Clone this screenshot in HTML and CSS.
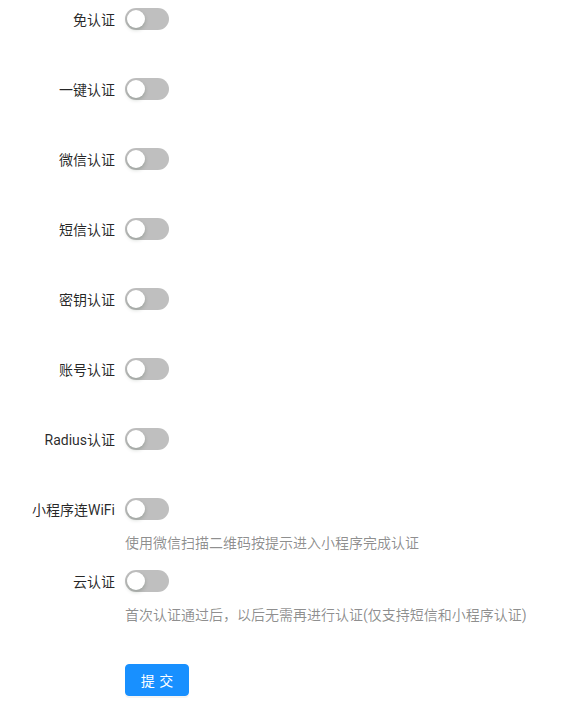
FILE: index.html
```html
<!DOCTYPE html>
<html lang="zh-CN">
<head>
    <meta charset="UTF-8">
    <meta name="viewport" content="width=device-width, initial-scale=1.0">
    <title>认证设置</title>
    <link rel="stylesheet" href="styles.css">
</head>
<body>
    <form class="auth-form">
        <div class="item">
            <label class="item-label">免认证</label>
            <div class="item-control"><button type="button" class="switch"></button></div>
        </div>
        <div class="item">
            <label class="item-label">一键认证</label>
            <div class="item-control"><button type="button" class="switch"></button></div>
        </div>
        <div class="item">
            <label class="item-label">微信认证</label>
            <div class="item-control"><button type="button" class="switch"></button></div>
        </div>
        <div class="item">
            <label class="item-label">短信认证</label>
            <div class="item-control"><button type="button" class="switch"></button></div>
        </div>
        <div class="item">
            <label class="item-label">密钥认证</label>
            <div class="item-control"><button type="button" class="switch"></button></div>
        </div>
        <div class="item">
            <label class="item-label">账号认证</label>
            <div class="item-control"><button type="button" class="switch"></button></div>
        </div>
        <div class="item">
            <label class="item-label">Radius认证</label>
            <div class="item-control"><button type="button" class="switch"></button></div>
        </div>
        <div class="item with-extra">
            <label class="item-label">小程序连WiFi</label>
            <div class="item-control">
                <button type="button" class="switch"></button>
                <div class="extra">使用微信扫描二维码按提示进入小程序完成认证</div>
            </div>
        </div>
        <div class="item with-extra">
            <label class="item-label">云认证</label>
            <div class="item-control">
                <button type="button" class="switch"></button>
                <div class="extra">首次认证通过后，以后无需再进行认证(仅支持短信和小程序认证)</div>
            </div>
        </div>
        <div class="item submit-row">
            <div class="item-label"></div>
            <div class="item-control"><button type="submit" class="btn-primary">提 交</button></div>
        </div>
    </form>
</body>
</html>
```

FILE: styles.css
```css
*{
    padding:0px;
    margin:0px;
    box-sizing: border-box;
}
body{
    background:#fff;
    font-family: Roboto, "Noto Sans CJK SC", sans-serif;
    font-size:14px;
    color:rgba(0,0,0,.85);
}
.item{
    display:flex;
    align-items:flex-start;
    margin-bottom:32px;
}
.item.with-extra{
    margin-bottom:8px;
}
.item-label{
    width:115px;
    flex-shrink:0;
    margin-right:10px;
    padding-top:2px;
    text-align:right;
    line-height:36px;
    white-space:nowrap;
}
.item-control{
    flex:1;
    min-height:38px;
    display:flex;
    flex-direction:column;
    align-items:flex-start;
}
.switch{
    position:relative;
    margin-top:8px;
    width:44px;
    height:22px;
    border:none;
    border-radius:100px;
    background-color:rgba(0,0,0,.25);
    cursor:pointer;
    flex-shrink:0;
}
.switch::after{
    content:'';
    position:absolute;
    top:2px;
    left:2px;
    width:18px;
    height:18px;
    border-radius:50%;
    background:#fff;
    box-shadow:0 2px 4px 0 rgba(0,35,11,.2);
}
.extra{
    margin-top:12px;
    line-height:22px;
    color:rgba(0,0,0,.45);
    white-space:nowrap;
}
.submit-row{
    margin-top:38px;
}
.submit-row .item-control{
    min-height:32px;
}
.btn-primary{
    width:64px;
    height:32px;
    border:1px solid #1890ff;
    border-radius:4px;
    background:#1890ff;
    color:#fff;
    font-family: Roboto, "Noto Sans CJK SC", sans-serif;
    font-size:14px;
    word-spacing:1px;
    box-shadow:0 2px 0 rgba(0,0,0,.045);
    cursor:pointer;
}
```
